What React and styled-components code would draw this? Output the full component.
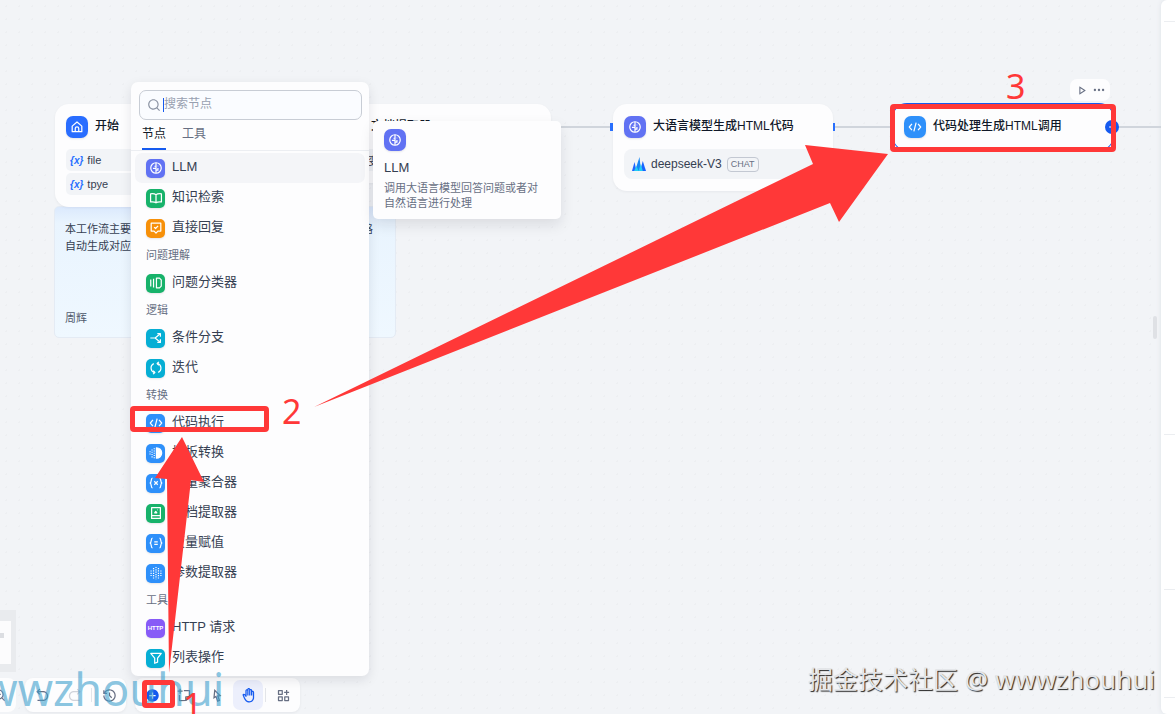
import React from 'react';
import styled, { createGlobalStyle } from 'styled-components';
import {
  RiAddCircleFill,
  RiAddLine,
  RiArrowGoBackLine,
  RiArrowGoForwardLine,
  RiCursorLine,
  RiFunctionAddLine,
  RiHand,
  RiHistoryLine,
  RiMoreFill,
  RiPlayLine,
  RiSearchLine,
  RiStickyNoteAddLine,
  RiZoomOutLine,
} from 'react-icons/ri';

const COLORS = {
  canvas: '#f2f4f7',
  white: '#fdfdfe',
  text: '#101828',
  body: '#354052',
  muted: '#676f83',
  line: '#d0d5dc',
  primary: '#155aef',
  indigo: '#6172f3',
  green: '#17b26a',
  orange: '#f79009',
  cyan: '#06aed4',
  blue: '#2e90fa',
  violet: '#875bf7',
  start: '#296dff',
  mark: '#ff3838',
};

const GLYPHS = {
  home: (
    <>
      <path d="M2.5 7 8 2.2 13.5 7v6.3h-11z" />
      <path d="M6 13.3V9.8a2 2 0 0 1 4 0v3.5" />
    </>
  ),
  llm: (
    <>
      <circle cx="8" cy="8" r="6" />
      <path d="M8 2v12M8 6H6.2M4.5 8.5H8M8 10.5h2.2V8M10.2 5.5v.6" />
    </>
  ),
  book: <path d="M8 4.2C6.5 3 4 3 1.8 3.2v9.3c2.2-.2 4.7-.2 6.2 1 1.5-1.2 4-1.2 6.2-1V3.2C12 3 9.5 3 8 4.2zM8 4.2v9" />,
  answer: (
    <>
      <path d="M2.5 2.500h11v9h-3.300L8 13.800l-2.200-2.300H2.500z" />
      <path d="m5.800 7 1.700 1.600 2.900-3" />
    </>
  ),
  classifier: (
    <>
      <path d="M2 4v8M5.200 3v10" />
      <path d="M8.500 2.500H12L14 4.500v7l-2 2H8.500z" />
    </>
  ),
  branch: (
    <>
      <path d="M1.500 8h5.500l5.500-4.500M7 8l5.500 4.500" />
      <path d="M9.500 3h3.500v3.500M9.500 13h3.500V9.500" />
    </>
  ),
  loop: (
    <>
      <path d="M9.500 2.700A5.500 5.500 0 0 1 10.500 13M6.500 13.300A5.500 5.500 0 0 1 5.500 3" />
      <path d="M11.300 1 9.300 2.800l2 2M4.700 15l2-1.800-2-2" />
    </>
  ),
  code: <path d="M4.500 4.500 1.500 8l3 3.500M11.500 4.500l3 3.500-3 3.500M9.300 3l-2.600 10" />,
  template: (
    <>
      <path d="M8.500 2a6 6 0 0 1 0 12z" fill="currentColor" />
      <path d="M6 2.500v12M3.500 4v9M1.200 6v5" strokeDasharray="1.200 1.400" />
    </>
  ),
  variable: (
    <>
      <path d="M4 2.500C1.800 2.500 3.300 7 1.300 8c2 1 .5 5.500 2.700 5.500M12 2.500c2.200 0 .7 4.500 2.700 5.500-2 1-.5 5.500-2.700 5.500" />
      <path d="m6 6 4 4M10 6l-4 4" />
    </>
  ),
  extractor: (
    <>
      <path d="M3 1.800h10v12.400H3zM3 11h10" />
      <path d="m6.500 7.800 1.200-1.600 1.300 1.600zM9.500 4.500h.6" />
    </>
  ),
  assign: (
    <>
      <path d="M4 2.500C1.800 2.500 3.300 7 1.300 8c2 1 .5 5.500 2.700 5.500M12 2.500c2.200 0 .7 4.500 2.700 5.500-2 1-.5 5.500-2.700 5.500" />
      <path d="M6 6.700h4M6 9.500h4" />
    </>
  ),
  params: <path d="M8 1v14M5.200 2.200v12M10.800 2.200v12M2.400 5v6.500M13.600 5v6.500" strokeDasharray="1.400 1.300" />,
  filter: <path d="M2 2.800h12L9.800 8.200v4.600L6.500 14V8.200z" />,
};

const MENU = [
  {
    items: [
      { glyph: 'llm', color: COLORS.indigo, label: 'LLM', active: true },
      { glyph: 'book', color: COLORS.green, label: '知识检索' },
      { glyph: 'answer', color: COLORS.orange, label: '直接回复' },
    ],
  },
  {
    title: '问题理解',
    items: [{ glyph: 'classifier', color: COLORS.green, label: '问题分类器' }],
  },
  {
    title: '逻辑',
    items: [
      { glyph: 'branch', color: COLORS.cyan, label: '条件分支' },
      { glyph: 'loop', color: COLORS.cyan, label: '迭代' },
    ],
  },
  {
    title: '转换',
    items: [
      { glyph: 'code', color: COLORS.blue, label: '代码执行' },
      { glyph: 'template', color: COLORS.blue, label: '模板转换' },
      { glyph: 'variable', color: COLORS.blue, label: '变量聚合器' },
      { glyph: 'extractor', color: COLORS.green, label: '文档提取器' },
      { glyph: 'assign', color: COLORS.blue, label: '变量赋值' },
      { glyph: 'params', color: COLORS.blue, label: '参数提取器' },
    ],
  },
  {
    title: '工具',
    items: [
      { glyph: 'http', color: COLORS.violet, label: 'HTTP 请求' },
      { glyph: 'filter', color: COLORS.cyan, label: '列表操作' },
    ],
  },
];

const BlockIcon = ({ glyph, color, large }) => (
  <IconBox $color={color} $large={large}>
    {glyph === 'http' ? (
      <HttpText>HTTP</HttpText>
    ) : (
      <svg viewBox="0 0 16 16" fill="none" stroke="currentColor" strokeWidth="1.4" strokeLinejoin="round">
        {GLYPHS[glyph]}
      </svg>
    )}
  </IconBox>
);

const NodeHeader = ({ glyph, color, title }) => (
  <Header>
    <BlockIcon glyph={glyph} color={color} large />
    <NodeTitle>{title}</NodeTitle>
  </Header>
);

const NodeMenu = () => (
  <Menu>
    <SearchBox>
      <RiSearchLine size={14} aria-hidden="true" />
      <Caret />
      <SearchInput type="text" aria-label="搜索节点" placeholder="搜索节点" />
    </SearchBox>
    <Tabs>
      <Tab type="button" $active>节点</Tab>
      <Tab type="button">工具</Tab>
    </Tabs>
    <List>
      {MENU.map((group, index) => (
        <div key={index}>
          {group.title && <GroupTitle>{group.title}</GroupTitle>}
          {group.items.map((item) => (
            <MenuItem type="button" key={item.label} $active={item.active}>
              <BlockIcon glyph={item.glyph} color={item.color} />
              <ItemLabel>{item.label}</ItemLabel>
            </MenuItem>
          ))}
        </div>
      ))}
    </List>
  </Menu>
);

const Toolbar = () => (
  <ToolbarRow>
    <EdgeGroup>
      <RiZoomOutLine size={14} aria-hidden="true" />
    </EdgeGroup>
    <ToolGroup>
      <Tool type="button" aria-label="撤销"><RiArrowGoBackLine /></Tool>
      <Tool type="button" aria-label="重做" disabled><RiArrowGoForwardLine /></Tool>
      <Divider />
      <Tool type="button" aria-label="历史"><RiHistoryLine /></Tool>
    </ToolGroup>
    <ToolGroup>
      <Tool type="button" aria-label="添加节点" $tone={COLORS.primary}><RiAddCircleFill /></Tool>
      <Tool type="button" aria-label="添加注释"><RiStickyNoteAddLine /></Tool>
      <Tool type="button" aria-label="指针"><RiCursorLine /></Tool>
      <Tool type="button" aria-label="手型" $tone={COLORS.primary} $active><RiHand /></Tool>
      <Divider />
      <Tool type="button" aria-label="整理节点"><RiFunctionAddLine /></Tool>
    </ToolGroup>
  </ToolbarRow>
);

const App = () => (
  <>
    <GlobalStyle />
    <Page>
      <Canvas>
        <Edge $x={551} $width={60} />
        <Edge $x={833} $width={60} />
        <Edge $x={1113} $width={48} />
        <Port $x={610} />
        <Port $x={832} />

        <Note>
          <p>
            本工作流主要是帮助用户上传文档后经过大语言模型分析的表格
            <br />
            自动生成对应的HTML页面
          </p>
          <Author>周辉</Author>
        </Note>

        <Node $x={55}>
          <NodeHeader glyph="home" color={COLORS.start} title="开始" />
          <Params>
            <Param><Var>{'{x}'}</Var>file</Param>
            <Param><Var>{'{x}'}</Var>tpye</Param>
          </Params>
        </Node>

        <Node $x={331}>
          <NodeHeader glyph="extractor" color={COLORS.green} title="文档提取器" />
          <Params>
            <Param>输入变量</Param>
          </Params>
        </Node>

        <Node $x={613}>
          <NodeHeader glyph="llm" color={COLORS.indigo} title="大语言模型生成HTML代码" />
          <Model>
            <svg width="14" height="14" viewBox="0 0 14 14" aria-hidden="true">
              <path d="M0 14 2.500 5l2 9z" fill="#1e66ff" />
              <path d="M3 14 7.500 0 9 14z" fill="#1687f5" />
              <path d="m8 14 2.800-10L14 14z" fill="#1664ff" />
              <path d="m2 14 2.500-5 2 5zM6.500 14l2.300-7 2 7z" fill="#22cdf4" />
            </svg>
            deepseek-V3
            <Badge>CHAT</Badge>
          </Model>
        </Node>

        <Node $x={893} $selected>
          <NodeHeader glyph="code" color={COLORS.blue} title="代码处理生成HTML调用" />
        </Node>
        <AddPort type="button" aria-label="添加下一个节点"><RiAddLine size={10} /></AddPort>
        <NodeActions>
          <ActionButton type="button" aria-label="运行"><RiPlayLine size={13} /></ActionButton>
          <ActionButton type="button" aria-label="更多"><RiMoreFill size={14} /></ActionButton>
        </NodeActions>

        <ResizeHandle />

        <Footer>
          <MiniMap><MiniView><MiniBlock /></MiniView></MiniMap>
          <Toolbar />
        </Footer>

        <NodeMenu />
        <Tooltip role="tooltip">
          <BlockIcon glyph="llm" color={COLORS.indigo} large />
          <TooltipTitle>LLM</TooltipTitle>
          <TooltipText>调用大语言模型回答问题或者对自然语言进行处理</TooltipText>
        </Tooltip>

        <BlueMark>wwwzhouhui</BlueMark>
        <Arrows width="1160" height="714" viewBox="0 0 1160 714" aria-hidden="true">
          <path d="M314 407 813 164 805 145 888 154 839 222 830 203z" />
          <path d="M182 437 204 482 191 480 169 673 167 479 155 478z" />
        </Arrows>
        <MarkBox $x={130} $y={406} $width={139} $height={26} />
        <MarkBox $x={142} $y={680} $width={33} $height={28} />
        <MarkBox $x={890} $y={104} $width={226} $height={48} />
        <Step $x={183} $y={685}>1</Step>
        <Step $x={282} $y={391}>2</Step>
        <Step $x={1006} $y={66}>3</Step>
        <Credit>掘金技术社区 <Handle>@ wwwzhouhui</Handle></Credit>
      </Canvas>
      <SidePanel>
        <Section $height={22} />
        <Section $height={413} />
        <Section $height={155} />
        <Section $height={108} />
      </SidePanel>
    </Page>
  </>
);

const GlobalStyle = createGlobalStyle`
  *, *::before, *::after {
    box-sizing: border-box;
  }
  body {
    margin: 0;
    font-family: "Liberation Sans", "Noto Sans CJK SC", sans-serif;
    color: ${COLORS.body};
    overflow: hidden;
  }
  button, input {
    font: inherit;
    color: inherit;
    border: 0;
    padding: 0;
    background: none;
  }
  p {
    margin: 0;
  }
`;

const Page = styled.div`
  display: flex;
  height: 100vh;
  background: ${COLORS.canvas};
`;

const Canvas = styled.main`
  position: relative;
  flex: 1;
  min-width: 0;
  display: flex;
  flex-direction: column;
  justify-content: flex-end;
  overflow: hidden;
  background-image: radial-gradient(circle, #edeff2 1px, transparent 1px);
  background-size: 13px 13px;
`;

const SidePanel = styled.aside`
  width: 14px;
  padding-left: 3px;
  background: #fff;
  box-shadow: 0 0 5px #dfe2e7;
  border-radius: 6px 0 0 6px;
`;

const Section = styled.div`
  height: ${(props) => props.$height}px;
  border-bottom: 1px solid #eceef1;
`;

const Edge = styled.div`
  position: absolute;
  top: 126px;
  left: ${(props) => props.$x}px;
  width: ${(props) => props.$width}px;
  height: 2px;
  background: ${COLORS.line};
`;

const Port = styled.div`
  position: absolute;
  top: 123px;
  left: ${(props) => props.$x}px;
  width: 3px;
  height: 8px;
  background: #2970ff;
`;

const Node = styled.section`
  position: absolute;
  top: 104px;
  left: ${(props) => props.$x}px;
  width: 220px;
  padding: 12px 11px;
  border-radius: 14px;
  background: ${COLORS.white};
  box-shadow: ${(props) =>
    props.$selected ? `0 0 0 1px ${COLORS.primary}` : '0 1px 3px #1018280d'};
`;

const Header = styled.header`
  display: flex;
  align-items: center;
  gap: 7px;
`;

const NodeTitle = styled.span`
  padding-bottom: 2px;
  font-size: 12px;
  line-height: 20px;
  font-weight: 500;
  color: ${COLORS.text};
  white-space: nowrap;
`;

const IconBox = styled.span`
  flex: none;
  display: flex;
  align-items: center;
  justify-content: center;
  width: ${(props) => (props.$large ? 22 : 19)}px;
  height: ${(props) => (props.$large ? 22 : 19)}px;
  border-radius: ${(props) => (props.$large ? 7 : 5)}px;
  color: #fff;
  background: ${(props) => props.$color};
  box-shadow: 0 1px 2px #1018281a;

  svg {
    width: 14px;
    height: 14px;
  }
`;

const HttpText = styled.span`
  font-size: 6px;
  font-weight: 700;
`;

const Params = styled.div`
  display: flex;
  flex-direction: column;
  gap: 2px;
  margin-top: 11px;
`;

const Param = styled.div`
  display: flex;
  align-items: center;
  gap: 4px;
  height: 22px;
  padding: 0 4px;
  border-radius: 5px;
  background: ${COLORS.canvas};
  font-size: 11px;
`;

const Var = styled.span`
  font-size: 10px;
  font-style: italic;
  font-weight: 600;
  color: #2970ff;
`;

const Model = styled.div`
  display: flex;
  align-items: center;
  gap: 5px;
  height: 30px;
  margin-top: 11px;
  padding: 0 8px;
  border-radius: 8px;
  background: ${COLORS.canvas};
  font-size: 12px;
`;

const Badge = styled.span`
  padding: 0 3px;
  border: 1px solid #c3c8d2;
  border-radius: 4px;
  font-size: 9px;
  line-height: 13px;
  color: ${COLORS.muted};
`;

const AddPort = styled.button`
  position: absolute;
  top: 120px;
  left: 1105px;
  display: flex;
  align-items: center;
  justify-content: center;
  width: 14px;
  height: 14px;
  border-radius: 50%;
  color: #fff;
  background: ${COLORS.primary};
`;

const NodeActions = styled.div`
  position: absolute;
  top: 79px;
  left: 1070px;
  display: flex;
  align-items: center;
  padding: 2px;
  border-radius: 7px;
  background: ${COLORS.white};
`;

const ActionButton = styled.button`
  display: flex;
  align-items: center;
  justify-content: center;
  width: 18px;
  height: 18px;
  color: ${COLORS.muted};
`;

const Note = styled.section`
  position: absolute;
  top: 206px;
  left: 54px;
  width: 342px;
  height: 132px;
  display: flex;
  flex-direction: column;
  justify-content: space-between;
  padding: 14px 10px 10px;
  border: 1px solid #e4ebf4;
  border-radius: 5px;
  background: linear-gradient(#dbe9fd, #e9f4fe 16px, #eff8ff);
  font-size: 11px;
  line-height: 17px;
  white-space: nowrap;
`;

const Author = styled.span`
  color: #505a6d;
`;

const ResizeHandle = styled.div`
  position: absolute;
  top: 316px;
  right: 4px;
  width: 4px;
  height: 23px;
  border-radius: 2px;
  background: #dfe1e5;
`;

const Menu = styled.div`
  position: absolute;
  top: 82px;
  left: 131px;
  width: 238px;
  border-radius: 7px;
  background: ${COLORS.white};
  box-shadow: 0 4px 12px #1018281a;
`;

const SearchBox = styled.div`
  display: flex;
  align-items: center;
  height: 30px;
  margin: 8px 7px 0 8px;
  padding: 0 7px;
  border: 1px solid #c8cdd5;
  border-radius: 7px;
  background: #fafcff;
  color: #8b93a3;
`;

const Caret = styled.span`
  width: 1px;
  height: 14px;
  margin-left: 2px;
  background: ${COLORS.primary};
`;

const SearchInput = styled.input`
  flex: 1;
  min-width: 0;
  height: 24px;
  padding-bottom: 2px;
  font-size: 12px;
  outline: none;

  &::placeholder {
    color: #98a0b0;
  }
`;

const Tabs = styled.div`
  display: flex;
  gap: 16px;
  padding: 0 11px;
  border-bottom: 1px solid #eceef2;
`;

const Tab = styled.button`
  height: 30px;
  padding-bottom: 3px;
  border-bottom: 2px solid ${(props) => (props.$active ? COLORS.primary : 'transparent')};
  font-size: 12px;
  color: ${(props) => (props.$active ? COLORS.text : COLORS.muted)};
`;

const List = styled.div`
  padding: 2px 4px 3px;
`;

const GroupTitle = styled.div`
  height: 25px;
  padding: 0 11px;
  font-size: 11px;
  line-height: 24px;
  color: ${COLORS.muted};
`;

const MenuItem = styled.button`
  display: flex;
  align-items: center;
  gap: 7px;
  width: 100%;
  height: 30px;
  padding: 0 11px;
  border-radius: 7px;
  background: ${(props) => (props.$active ? '#f4f5f8' : 'none')};
  font-size: 13px;
  text-align: left;
`;

const ItemLabel = styled.span`
  padding-bottom: 3px;
  line-height: 20px;
`;

const Tooltip = styled.div`
  position: absolute;
  top: 121px;
  left: 373px;
  width: 188px;
  padding: 8px 18px 8px 11px;
  border-radius: 5px;
  background: ${COLORS.white};
  box-shadow: 0 6px 14px #1018281a;
`;

const TooltipTitle = styled.div`
  margin-top: 7px;
  font-size: 13px;
  line-height: 20px;
`;

const TooltipText = styled.p`
  margin-top: 3px;
  font-size: 11px;
  line-height: 15px;
  color: ${COLORS.muted};
`;

const Footer = styled.footer`
  display: flex;
  flex-direction: column;
  align-items: flex-start;
  gap: 6px;
  padding-bottom: 2px;
`;

const MiniMap = styled.div`
  width: 16px;
  padding: 11px 5px 8px 0;
  background: #e9ebee;
`;

const MiniView = styled.div`
  height: 43px;
  padding-top: 12px;
  background: #fcfcfd;
`;

const MiniBlock = styled.div`
  width: 4px;
  height: 5px;
  background: #dcdee2;
`;

const ToolbarRow = styled.div`
  display: flex;
  gap: 9px;
`;

const EdgeGroup = styled.div`
  display: flex;
  align-items: center;
  justify-content: flex-end;
  width: 16px;
  padding-right: 10px;
  border-radius: 0 8px 8px 0;
  background: ${COLORS.white};
  color: ${COLORS.muted};

  svg {
    flex: none;
  }
`;

const ToolGroup = styled.div`
  display: flex;
  align-items: center;
  gap: 2px;
  padding: 2px;
  border-radius: 8px;
  background: ${COLORS.white};
  box-shadow: 0 1px 3px #1018280f;
`;

const Tool = styled.button`
  display: flex;
  align-items: center;
  justify-content: center;
  width: 30px;
  height: 30px;
  border-radius: 7px;
  color: ${(props) => props.$tone || COLORS.muted};
  background: ${(props) => (props.$active ? '#eceffc' : 'none')};
  font-size: 15px;

  &:disabled {
    color: #d0d3da;
  }
`;

const Divider = styled.span`
  width: 1px;
  height: 14px;
  background: #e3e5e9;
`;

const BlueMark = styled.div`
  position: absolute;
  bottom: -5px;
  left: -53px;
  font-family: "Noto Sans", sans-serif;
  font-size: 45px;
  line-height: 60px;
  color: #3d9fcd99;
  pointer-events: none;
`;

const Arrows = styled.svg`
  position: absolute;
  top: 0;
  left: 0;
  fill: ${COLORS.mark};
  pointer-events: none;
`;

const MarkBox = styled.div`
  position: absolute;
  top: ${(props) => props.$y}px;
  left: ${(props) => props.$x}px;
  width: ${(props) => props.$width}px;
  height: ${(props) => props.$height}px;
  border: 5px solid ${COLORS.mark};
  border-radius: 4px;
  pointer-events: none;
`;

const Step = styled.span`
  position: absolute;
  top: ${(props) => props.$y}px;
  left: ${(props) => props.$x}px;
  font-family: "Noto Sans", sans-serif;
  font-size: 34px;
  line-height: 40px;
  color: ${COLORS.mark};
`;

const Credit = styled.div`
  position: absolute;
  right: 6px;
  bottom: 17px;
  font-family: "Noto Sans", "Noto Sans CJK SC", sans-serif;
  font-size: 25px;
  line-height: 36px;
  color: #e4e6e9;
  text-shadow: 1px 1px 1px #222;
`;

const Handle = styled.span`
  font-size: 26px;
`;

export default App;
